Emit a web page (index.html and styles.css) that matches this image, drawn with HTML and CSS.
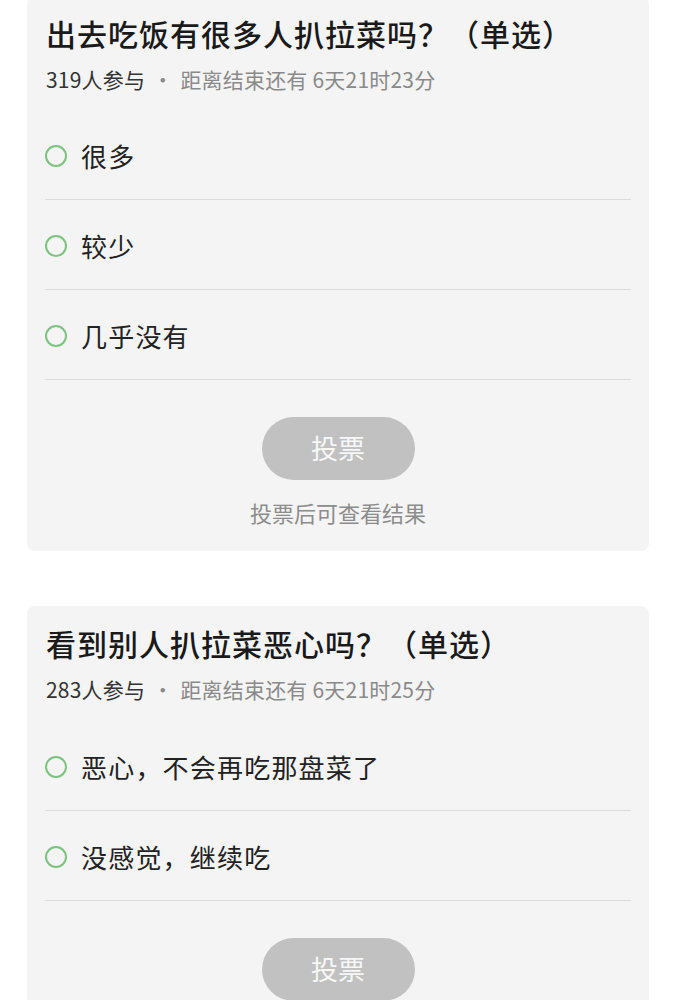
FILE: index.html
```html
<!DOCTYPE html>
<html lang="zh-CN">
<head>
<meta charset="utf-8">
<title>投票</title>
<link rel="stylesheet" href="styles.css">
</head>
<body>
<div class="page">
  <section class="card card-first">
    <h2 class="title">出去吃饭有很多人扒拉菜吗？（单选）</h2>
    <div class="meta"><span class="count">319人参与</span><span class="dot">·</span>距离结束还有 6天21时23分</div>
    <ul class="options">
      <li class="option"><span class="radio"></span><span class="label">很多</span></li>
      <li class="option"><span class="radio"></span><span class="label">较少</span></li>
      <li class="option"><span class="radio"></span><span class="label">几乎没有</span></li>
    </ul>
    <div class="actions">
      <button class="vote" type="button">投票</button>
      <div class="hint">投票后可查看结果</div>
    </div>
  </section>
  <section class="card card-second">
    <h2 class="title">看到别人扒拉菜恶心吗？（单选）</h2>
    <div class="meta"><span class="count">283人参与</span><span class="dot">·</span>距离结束还有 6天21时25分</div>
    <ul class="options">
      <li class="option"><span class="radio"></span><span class="label">恶心，不会再吃那盘菜了</span></li>
      <li class="option"><span class="radio"></span><span class="label">没感觉，继续吃</span></li>
    </ul>
    <div class="actions">
      <button class="vote" type="button">投票</button>
      <div class="hint">投票后可查看结果</div>
    </div>
  </section>
</div>
</body>
</html>
```
FILE: styles.css
```css
* { box-sizing: border-box; }
html, body { margin: 0; padding: 0; background: #ffffff; }
body {
  font-family: "Noto Sans CJK SC", "Noto Sans", sans-serif;
  color: #1a1a1a;
  overflow: hidden;
}
.page {
  display: flex;
  flex-direction: column;
  gap: 55px;
  padding: 0 27px;
}
.card {
  background: #f4f4f4;
  border-radius: 8px;
  padding: 17px 18px 24px;
}
.card-first { margin-top: -4px; }
.title {
  margin: 0 0 0 1px;
  font-size: 30px;
  line-height: 40px;
  font-weight: 500;
  color: #1a1a1a;
  letter-spacing: 1px;
}
.meta {
  margin: 11px 0 0 1px;
  font-size: 21px;
  line-height: 30px;
  color: #8a8a8a;
  letter-spacing: 0.2px;
}
.meta .count { color: #333333; }
.meta .dot { margin: 0 7px; }
.options {
  list-style: none;
  margin: 16px 0 0;
  padding: 0;
}
.card-second .options { margin-top: 17px; }
.option {
  display: flex;
  align-items: center;
  height: 90px;
  padding-top: 2px;
  border-bottom: 1px solid #dcdcdc;
}
.radio {
  width: 22px;
  height: 22px;
  border: 2px solid #7cc381;
  border-radius: 50%;
  flex: none;
}
.label {
  margin-left: 14px;
  font-size: 26px;
  color: #222222;
  letter-spacing: 1.2px;
}
.actions {
  display: flex;
  flex-direction: column;
  align-items: center;
  margin-top: 37px;
}
.vote {
  width: 153px;
  height: 63px;
  border: none;
  border-radius: 32px;
  background: #c1c1c1;
  color: #f7f7f7;
  font-family: inherit;
  font-size: 27px;
  padding: 0 0 2px;
}
.hint {
  margin-top: 17px;
  font-size: 22px;
  line-height: 30px;
  color: #8c8c8c;
}
```
